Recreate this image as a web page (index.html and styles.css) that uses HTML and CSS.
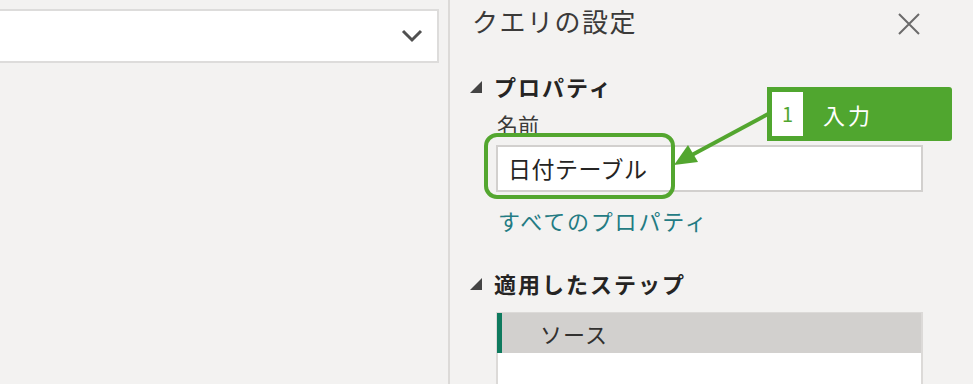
FILE: index.html
```html
<!DOCTYPE html>
<html lang="ja">
<head>
    <title>クエリの設定</title>
    <meta charset="UTF-8">
    <meta name="viewport" content="width=device-width, initial-scale=1.0">
    <link rel="stylesheet" href="styles.css">
</head>
<body>
<div class="layout">
    <div class="left-pane">
        <div class="dropdown">
            <svg class="chevron" width="22" height="14" viewBox="0 0 22 14">
                <path d="M2 2 L11 11 L20 2" fill="none" stroke="#505050" stroke-width="3"/>
            </svg>
        </div>
    </div>
    <div class="settings">
        <div class="settings-title">
            <span>クエリの設定</span>
            <svg class="close" width="22" height="22" viewBox="0 0 22 22">
                <path d="M1 1 L21 21 M21 1 L1 21" stroke="#6b6b6b" stroke-width="2"/>
            </svg>
        </div>

        <div class="section-head props-head">
            <svg class="tri" width="12" height="12" viewBox="0 0 12 12"><path d="M12 0 L12 12 L0 12 Z" fill="#444"/></svg>
            <span>プロパティ</span>
        </div>
        <div class="field-label">名前</div>
        <div class="name-input">日付テーブル</div>
        <div class="all-props">すべてのプロパティ</div>

        <div class="section-head steps-head">
            <svg class="tri" width="12" height="12" viewBox="0 0 12 12"><path d="M12 0 L12 12 L0 12 Z" fill="#444"/></svg>
            <span>適用したステップ</span>
        </div>
        <div class="steps">
            <div class="step selected">ソース</div>
        </div>
    </div>
</div>

<!-- annotation overlay -->
<svg class="overlay" width="973" height="384" viewBox="0 0 973 384">
    <rect x="486" y="135" width="187" height="62" rx="11" fill="none" stroke="#53a62f" stroke-width="4"/>
    <line x1="770" y1="113" x2="690" y2="156" stroke="#53a62f" stroke-width="4"/>
    <path d="M674 165 L698 162 L688 145 Z" fill="#53a62f"/>
</svg>
<div class="callout">
    <span class="callout-num">1</span>
    <span class="callout-text">入力</span>
</div>
</body>
</html>
```

FILE: styles.css
```css
html, body {
  margin: 0;
  height: 100%;
  overflow: hidden;
}
body {
  background: #f3f2f1;
  font-family: "Noto Sans CJK JP", "Noto Sans", sans-serif;
  color: #323130;
  position: relative;
}
.layout {
  display: flex;
  height: 100%;
}
.left-pane {
  width: 450px;
  flex-shrink: 0;
  border-right: 2px solid #dcdad8;
  padding-top: 9px;
  box-sizing: border-box;
}
.dropdown {
  width: 441px;
  margin-left: -2px;
  height: 54px;
  background: #fff;
  border: 2px solid #dddcdb;
  box-sizing: border-box;
  display: flex;
  align-items: center;
  justify-content: flex-end;
  padding-right: 14px;
}
.chevron {
  display: block;
}
.settings {
  flex: 1;
  padding-left: 22px;
  padding-right: 50px;
}
.settings-title {
  display: flex;
  align-items: center;
  justify-content: space-between;
  height: 42px;
  font-size: 26px;
  letter-spacing: 1.5px;
  line-height: 42px;
  color: #3b3a39;
  padding-right: 3px;
}
.settings-title .close {
  margin-top: 5px;
}
.section-head {
  display: flex;
  align-items: center;
  height: 30px;
  font-size: 22px;
  letter-spacing: 2px;
  font-weight: bold;
  color: #252423;
}
.section-head .tri {
  margin-left: -2px;
  margin-right: 12px;
  margin-top: 2px;
}
.props-head {
  margin-top: 29px;
}
.field-label {
  margin-top: 9px;
  margin-left: 25px;
  font-size: 21px;
  line-height: 28px;
  color: #3b3a39;
}
.name-input {
  margin-top: 7px;
  margin-left: 24px;
  height: 47px;
  box-sizing: border-box;
  background: #fff;
  border: 2px solid #d2d0ce;
  font-size: 23px;
  letter-spacing: 0.5px;
  line-height: 43px;
  padding-left: 10px;
  color: #252423;
}
.all-props {
  margin-top: 13px;
  margin-left: 26px;
  font-size: 22px;
  letter-spacing: 1.8px;
  line-height: 30px;
  color: #237b83;
}
.steps-head {
  margin-top: 33px;
}
.steps {
  margin-top: 14px;
  margin-left: 24px;
  height: 72px;
  background: #fff;
  border: 2px solid #dcdad8;
  border-bottom: none;
  box-sizing: border-box;
}
.step {
  height: 40px;
  line-height: 40px;
  font-size: 22px;
  letter-spacing: 1px;
  padding-left: 38px;
  color: #323130;
}
.step.selected {
  background: #d2d0ce;
  border-left: 5px solid #0e7a5e;
  margin-left: -1px;
  margin-top: -1px;
}
.overlay {
  position: absolute;
  left: 0;
  top: 0;
  pointer-events: none;
}
.callout {
  position: absolute;
  left: 767px;
  top: 87px;
  width: 185px;
  height: 54px;
  background: #50a62f;
  border-radius: 0 3px 3px 0;
  display: flex;
  align-items: center;
}
.callout-num {
  margin-left: 5px;
  width: 31px;
  height: 44px;
  background: #fff;
  color: #50a62f;
  font-size: 20px;
  line-height: 44px;
  text-align: center;
}
.callout-text {
  margin-left: 20px;
  color: #fff;
  font-size: 22px;
  letter-spacing: 3px;
}
```
